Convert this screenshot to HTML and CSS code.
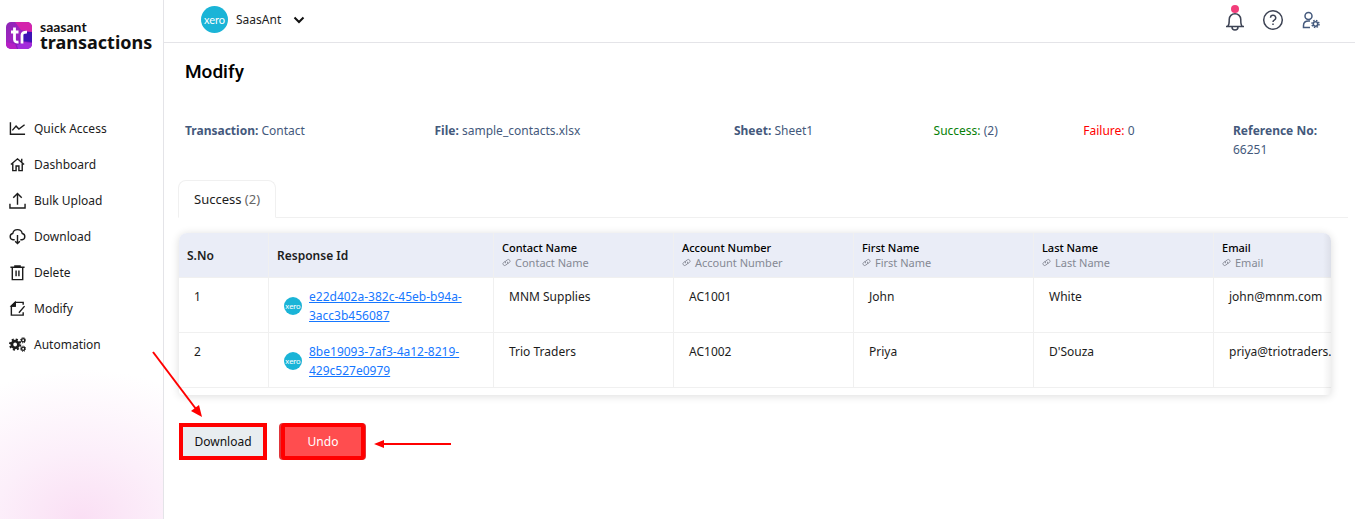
FILE: index.html
```html
<!DOCTYPE html>
<html lang="en">
<head>
  <meta charset="UTF-8" />
  <meta name="viewport" content="width=device-width, initial-scale=1" />
  <title>SaasAnt Transactions - Modify</title>
  <link rel="stylesheet" href="styles.css">
</head>
<body>

  <!-- shared icons -->
  <svg class="defs" aria-hidden="true">
    <symbol id="link" viewBox="0 0 16 16">
      <g fill="none" stroke="currentColor" stroke-width="1.5" stroke-linecap="round" transform="rotate(-35 8 8)">
        <path d="M7 5H4a3 3 0 0 0 0 6h3a3 3 0 0 0 3-2.500" />
        <path d="M9 11h3a3 3 0 0 0 0-6H9a3 3 0 0 0-3 2.500" />
      </g>
    </symbol>
  </svg>

  <aside class="sidebar">
    <a class="brand" href="#">
      <svg class="brand-mark" viewBox="0 0 26 27" aria-hidden="true">
        <defs>
          <linearGradient id="mark" x1="0" y1="0" x2="1" y2="1">
            <stop offset="0" stop-color="#8a27b5" />
            <stop offset="0.4" stop-color="#a024c0" />
            <stop offset="1" stop-color="#6a10b8" />
          </linearGradient>
          <clipPath id="markClip"><rect width="26" height="27" rx="5" /></clipPath>
        </defs>
        <g clip-path="url(#markClip)">
          <rect width="26" height="27" fill="url(#mark)" />
          <path d="M9 0h17v10L15 8z" fill="#d424ac" />
          <path d="M26 10v10l-11-1 1-9z" fill="#3d12b5" />
          <path d="M0 20l9 2 2 5H0z" fill="#b51fc4" />
          <path d="M11 23l8-3 7 1v6H12z" fill="#a32bdc" />
        </g>
        <path d="M8.500 5.500v12q0 3 4 2.500M5 10h7.500M16 21.500v-8.500q0-3 5-2.800" fill="none" stroke="#fff" stroke-width="2.800" />
      </svg>
      <span class="brand-text">
        <span class="brand-top">saasant</span>
        <span class="brand-name">transactions</span>
      </span>
    </a>

    <nav>
      <ul class="menu">
        <li><a href="#">
          <svg viewBox="0 0 18 18"><path d="M1.500 2.500v12.500H17M3.500 11l4-4.500 3 3 6-4.500" /></svg>
          Quick Access</a></li>
        <li><a href="#">
          <svg viewBox="0 0 18 18"><path d="M2 9l7-6 7 6M4 8v7.500h3.500v-5h3v5H14V8M13.500 3v3" /></svg>
          Dashboard</a></li>
        <li><a href="#">
          <svg viewBox="0 0 18 18"><path d="M1 12.500v4.500h16v-4.500M9 13.500V1.500M4.500 6L9 1.500l4.500 4.500" /></svg>
          Bulk Upload</a></li>
        <li><a href="#">
          <svg viewBox="0 0 18 18"><path d="M6 12.500H4.200a3.400 3.400 0 0 1-.2-6.700 5.100 5.100 0 0 1 10 0 3.400 3.400 0 0 1-.2 6.700H12M9 7.500V16.500M6.500 14L9 16.500l2.500-2.500" /></svg>
          Download</a></li>
        <li><a href="#">
          <svg viewBox="0 0 18 18"><path d="M1.500 3.500h15M5.500 2h7M3.500 4v12.500h11V4M7.500 7v6M10.500 7v6" /></svg>
          Delete</a></li>
        <li><a href="#">
          <svg viewBox="0 0 18 18"><path d="M15 5V2.500H6.500L2.500 6.500V16H15v-3M6.500 2.500v4h-4M16.500 6.500l-6 7" /><path class="solid" d="M6.500 2.500v4h-4z" /></svg>
          Modify</a></li>
        <li><a href="#">
          <svg viewBox="0 0 18 18">
            <circle cx="6.500" cy="9" r="3.500" stroke-width="3" />
            <circle cx="6.500" cy="9" r="5.500" stroke-width="2" stroke-dasharray="2.200 2.120" />
            <circle cx="15" cy="4.500" r="1.700" stroke-width="1.500" />
            <circle cx="15" cy="4.500" r="2.800" stroke-width="1" stroke-dasharray="1.200 1" />
            <circle cx="15" cy="13.500" r="1.700" stroke-width="1.500" />
            <circle cx="15" cy="13.500" r="2.800" stroke-width="1" stroke-dasharray="1.200 1" />
          </svg>
          Automation</a></li>
      </ul>
    </nav>
  </aside>

  <div class="main">

    <!-- TOP BAR -->
    <header class="topbar">
      <button type="button" class="company">
        <span class="xero">xero</span>
        SaasAnt
        <svg class="chevron" viewBox="0 0 12 8"><path d="M1.500 1.500L6 6l4.500-4.500" /></svg>
      </button>
      <div class="actions">
        <button type="button" aria-label="Notifications">
          <svg viewBox="0 0 24 24">
            <path d="M3 18.500h18M4.500 18.500c2-1.500 1.700-3.500 1.700-7a5.800 5.800 0 0 1 11.600 0c0 3.500-.3 5.500 1.700 7M9 19a3 3 0 0 0 6 0" />
          </svg>
          <span class="dot"></span>
        </button>
        <button type="button" aria-label="Help">
          <svg viewBox="0 0 24 24">
            <circle cx="12" cy="12" r="9.300" />
            <path d="M9.500 9.800a2.600 2.600 0 1 1 3.800 2.300c-1 .5-1.300.9-1.300 1.900M12 15.500v1.500" />
          </svg>
        </button>
        <button type="button" class="account" aria-label="Account settings">
          <svg viewBox="0 0 24 24">
            <circle cx="9.500" cy="8" r="3.500" />
            <path d="M11 19.500H4.500v-2c0-3 2-4.500 5-4.500h1.500" />
            <circle cx="16.500" cy="16" r="2.200" />
            <circle cx="16.500" cy="16" r="3.500" stroke-dasharray="1.500 1.250" />
          </svg>
        </button>
      </div>
    </header>

    <main class="content">
      <h1>Modify</h1>

      <!-- SUMMARY -->
      <div class="summary">
        <div><b>Transaction:</b> Contact</div>
        <div><b>File:</b> sample_contacts.xlsx</div>
        <div><b>Sheet:</b> Sheet1</div>
        <div><span class="ok">Success:</span> (2)</div>
        <div><span class="fail">Failure:</span> 0</div>
        <div><b>Reference No:</b> 66251</div>
      </div>

      <div class="tabs">
        <button type="button" class="tab">Success <span>(2)</span></button>
      </div>

      <!-- RESULTS -->
      <div class="table-card">
        <table>
          <thead>
            <tr>
              <th class="col-no">S.No</th>
              <th class="col-id">Response Id</th>
              <th class="field">Contact Name<small><svg><use href="#link" /></svg>Contact Name</small></th>
              <th class="field">Account Number<small><svg><use href="#link" /></svg>Account Number</small></th>
              <th class="field">First Name<small><svg><use href="#link" /></svg>First Name</small></th>
              <th class="field">Last Name<small><svg><use href="#link" /></svg>Last Name</small></th>
              <th class="field">Email<small><svg><use href="#link" /></svg>Email</small></th>
            </tr>
          </thead>
          <tbody>
            <tr>
              <td>1</td>
              <td><div class="response"><span class="xero small">xero</span><a href="#">e22d402a-382c-45eb-b94a-3acc3b456087</a></div></td>
              <td>MNM Supplies</td>
              <td>AC1001</td>
              <td>John</td>
              <td>White</td>
              <td>john@mnm.com</td>
            </tr>
            <tr>
              <td>2</td>
              <td><div class="response"><span class="xero small">xero</span><a href="#">8be19093-7af3-4a12-8219-429c527e0979</a></div></td>
              <td>Trio Traders</td>
              <td>AC1002</td>
              <td>Priya</td>
              <td>D'Souza</td>
              <td>priya@triotraders.com</td>
            </tr>
          </tbody>
        </table>
      </div>

      <div class="buttons">
        <button type="button" class="btn download">Download</button>
        <button type="button" class="btn undo">Undo</button>
        <svg class="arrow arrow-down" viewBox="0 0 52 68" aria-hidden="true">
          <path d="M1 1l43 57" />
          <polygon points="50,66 39,60 47,54" />
        </svg>
        <svg class="arrow arrow-left" viewBox="0 0 78 10" aria-hidden="true">
          <path d="M8 5h69" />
          <polygon points="0,5 10,1 10,9" />
        </svg>
      </div>
    </main>

  </div>

</body>
</html>
```
FILE: styles.css
```css
* { box-sizing: border-box; }

body {
  margin: 0;
  min-height: 100vh;
  display: flex;
  background: #fff;
  color: #1c1c1c;
  font-family: 'Segoe UI', 'Noto Sans', sans-serif;
  font-size: 12px;
  line-height: 19px;
}

button {
  font: inherit;
  color: inherit;
  background: none;
  border: none;
  padding: 0;
  cursor: pointer;
}

.defs { position: absolute; width: 0; height: 0; }

/* Sidebar */
.sidebar {
  width: 164px;
  flex-shrink: 0;
  border-right: 1px solid #e4e4e8;
  background: radial-gradient(ellipse 190px 150px at 50% 100%, #fadff4 0%, #fceffa 45%, #fff 100%);
}

.brand {
  display: flex;
  align-items: center;
  gap: 8px;
  padding: 20px 6px 0;
  color: #111;
  text-decoration: none;
}

.brand-mark { width: 26px; height: 27px; flex-shrink: 0; }
.brand-text { display: flex; flex-direction: column; font-weight: 700; }
.brand-top { font-family: Lato, sans-serif; font-size: 14px; line-height: 13px; }
.brand-name { font-size: 18px; line-height: 18px; }

.menu {
  list-style: none;
  margin: 59px 0 0;
  padding: 0 9px;
}

.menu a {
  display: flex;
  align-items: center;
  gap: 8px;
  height: 36px;
  color: #1c1c1c;
  text-decoration: none;
}

.menu svg {
  width: 17px;
  height: 17px;
  fill: none;
  stroke: #1c1c1c;
  stroke-width: 1.5;
}

.menu .solid { fill: #1c1c1c; }

/* Top bar */
.main { flex: 1; min-width: 0; }

.topbar {
  display: flex;
  align-items: center;
  justify-content: space-between;
  height: 43px;
  padding: 0 32px 3px 37px;
  border-bottom: 1px solid #e4e4e8;
}

.company { display: flex; align-items: center; gap: 8px; }

.xero {
  display: flex;
  align-items: center;
  justify-content: center;
  width: 27px;
  height: 27px;
  flex-shrink: 0;
  border-radius: 50%;
  background: #1ab4d7;
  color: #fff;
  font-family: Lato, sans-serif;
  font-size: 11px;
}

.xero.small { width: 18px; height: 18px; font-size: 8px; }

.chevron { width: 12px; height: 8px; margin-left: 4px; fill: none; stroke: #111; stroke-width: 2; }

.actions { display: flex; gap: 14px; }
.actions button { position: relative; height: 24px; color: #3d4354; }
.actions svg { width: 24px; height: 24px; fill: none; stroke: currentColor; stroke-width: 1.5; }
.actions .account { color: #44597c; }

.dot {
  position: absolute;
  top: -3px;
  left: 8px;
  width: 8px;
  height: 8px;
  border-radius: 50%;
  background: #f23d7a;
}

/* Content */
.content { padding: 16px 7px 0 14px; }

h1 {
  margin: 0 7px;
  font-family: Roboto, sans-serif;
  font-size: 19px;
  line-height: 26px;
  font-weight: 500;
  color: #000;
}

.summary {
  display: grid;
  grid-template-columns: 5fr 6fr 4fr 3fr 3fr 115px;
  margin: 36px 0 0 7px;
  color: #44597c;
}

.summary b { font-weight: 700; }
.ok { color: #078007; }
.fail { color: #f00; }

.tabs {
  display: flex;
  margin-top: 21px;
  border-bottom: 1px solid #f0f0f0;
}

.tab {
  height: 38px;
  padding: 1px 15px 0;
  margin-bottom: -1px;
  border: 1px solid #f0f0f0;
  border-bottom-color: #fff;
  border-radius: 8px 8px 0 0;
  background: #fff;
  font-size: 13px;
}

.tab span { color: #666; }

/* Table */
.table-card {
  margin: 15px 17px 0 1px;
  padding-bottom: 7px;
  overflow: hidden;
  border-radius: 8px 8px 4px 4px;
  box-shadow: 0 1px 8px rgba(0,0,0,0.14);
  background: #fff;
  position: relative;
}

.table-card::after {
  content: "";
  position: absolute;
  top: 0;
  right: 0;
  bottom: 0;
  width: 8px;
  background: linear-gradient(to left, rgba(0,0,0,0.06), transparent);
}

table {
  width: 1215px;
  table-layout: fixed;
  border-collapse: separate;
  border-spacing: 0;
}

th {
  height: 45px;
  padding: 0 8px;
  background: #eaedf7;
  border-right: 1px solid #f0f0f0;
  border-bottom: 1px solid #f0f0f0;
  text-align: left;
  font-weight: 600;
}

.col-no { width: 90px; }
.col-id { width: 225px; }

.field { font-size: 11px; line-height: 15px; font-weight: 500; color: #000; }
.field small {
  display: flex;
  align-items: center;
  gap: 4px;
  font-size: 11px;
  font-weight: 400;
  color: #858994;
}
.field svg { width: 9px; height: 9px; }

td {
  height: 55px;
  padding: 9px 15px 7px;
  border-right: 1px solid #f0f0f0;
  border-bottom: 1px solid #f0f0f0;
  vertical-align: top;
}

.response { display: flex; align-items: center; gap: 7px; }
.response a { color: #1677ff; text-decoration: underline; }

/* Buttons */
.buttons {
  position: relative;
  display: flex;
  gap: 14px;
  margin: 28px 0 0 1px;
}

.btn {
  height: 37px;
  border: 4px solid #f00;
}

.download { width: 88px; background: #e8edf0; color: #111; }
.undo {
  width: 84px;
  border-radius: 4px;
  background: #ff4d4f;
  color: #fff;
  box-shadow: -2px 0 0 #e0353a, 1px 0 0 #e0353a;
}

.arrow { position: absolute; stroke: #f00; stroke-width: 2; fill: #f00; }
.arrow polygon { stroke: none; }
.arrow-down { left: -27px; top: -72px; width: 52px; height: 68px; }
.arrow-left { left: 195px; top: 16px; width: 78px; height: 10px; }
```
